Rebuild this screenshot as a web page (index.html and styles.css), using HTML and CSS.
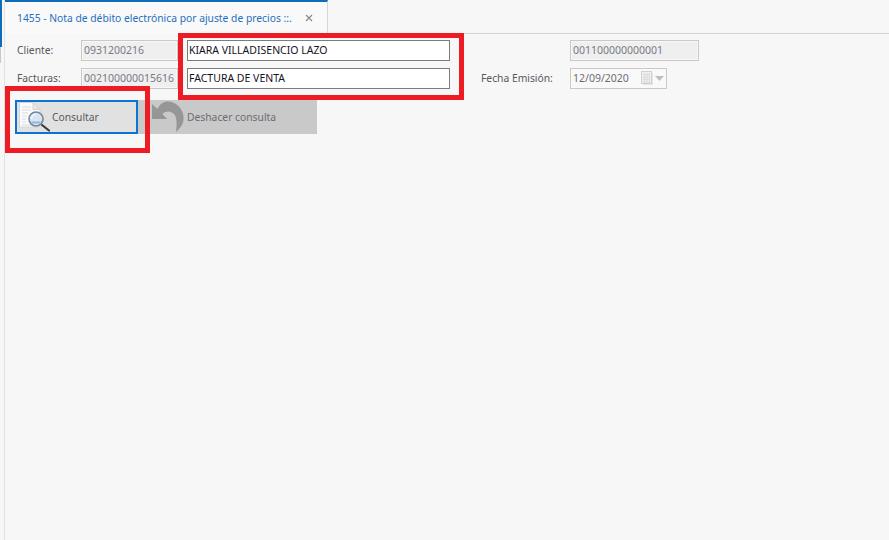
FILE: index.html
```html
<!DOCTYPE html>
<html lang="es">
<head>
<meta charset="utf-8">
<title>Nota de débito</title>
<link rel="stylesheet" href="styles.css">
</head>
<body>
<div class="app">
  <div class="rail"><div class="rail-blue"></div><div class="rail-gray"></div></div>
  <div class="main">
    <div class="tabbar">
      <div class="tab">
        <span class="tab-title">1455 - Nota de débito electrónica por ajuste de precios ::.</span>
        <svg class="tab-close" width="8" height="8" viewBox="0 0 8 8"><path d="M1 1l6 6M7 1l-6 6" stroke="#8a8a8a" stroke-width="1.2" fill="none"/></svg>
      </div>
    </div>
    <div class="form">
      <div class="row">
        <label class="lbl">Cliente:</label>
        <div class="field ro f-code">0931200216</div>
        <div class="field edit f-name">KIARA VILLADISENCIO LAZO</div>
        <div class="field ro f-right">001100000000001</div>
      </div>
      <div class="row">
        <label class="lbl">Facturas:</label>
        <div class="field ro f-code">002100000015616</div>
        <div class="field edit f-name">FACTURA DE VENTA</div>
        <label class="lbl lbl-date">Fecha Emisión:</label>
        <div class="field date">
          <span class="date-text">12/09/2020</span>
          <svg class="cal" width="14" height="16" viewBox="0 0 14 16"><rect x="1.500" y="1.500" width="10" height="12" fill="#f0f0f0" stroke="#d0d0d0"/><path d="M3 4.500h7M3 7h7M3 9.500h7M3 12h7M4.500 3v10M7 3v10M9.500 3v10" stroke="#dcdcdc" stroke-width="1"/><path d="M12.500 3v11.500H3" stroke="#e6e6e6" fill="none"/></svg>
          <svg class="caret" width="9" height="5" viewBox="0 0 9 5"><path d="M0 0h9L4.500 5z" fill="#bcc0b6"/></svg>
        </div>
      </div>
      <div class="actions">
        <button class="btn btn-primary" type="button">
          <svg class="btn-icon" width="34" height="32" viewBox="0 0 34 32">
            <path d="M1.500 1.500H15l7 7V26H1.500z" fill="#fbfbfb" stroke="#d6d6d6"/>
            <path d="M15 1.500V8.500h7z" fill="#e8e8e8" stroke="#d2d2d2"/>
            <path d="M4 6h9M4 9h9M4 12h6M4 15h5M4 18h4M4 21h4M4 24h10" stroke="#d8dae0" stroke-width="1"/>
            <path d="M24 24l7 5.500" stroke="#3a3a3a" stroke-width="2.200" stroke-linecap="round"/>
            <circle cx="18" cy="18" r="7" fill="#d6e4f3" stroke="#71859b" stroke-width="1.600"/>
            <path d="M13.500 18a4.500 4.500 0 0 1 4.500-4.500" stroke="#f6f9fc" stroke-width="1.500" fill="none"/>
            <path d="M13.500 21.500h9" stroke="#94b6d8" stroke-width="2"/>
          </svg>
          <span>Consultar</span>
        </button>
        <button class="btn btn-off" type="button" disabled>
          <svg class="btn-icon-undo" width="34" height="32" viewBox="0 0 34 32">
            <path d="M0 3V18H15L10.500 13C14 9.500 19 10 22 13C25 16 25 23 24 31C30 26 33 20 31 13C29 5 22 0 15 .5C11 1 8 3 5.500 8Z" fill="#969696"/>
          </svg>
          <span>Deshacer consulta</span>
        </button>
      </div>
    </div>
  </div>
</div>
<div class="mark mark-fields"></div>
<div class="mark mark-button"></div>
</body>
</html>
```
FILE: styles.css
```css
* { box-sizing: border-box; }
html, body { margin: 0; padding: 0; height: 100%; overflow: hidden; }
body {
  background: #f7f7f7;
  font-family: "Noto Sans", "Open Sans", sans-serif;
  font-size: 10.3px;
  color: #555a62;
  position: relative;
}
.app { display: flex; width: 889px; height: 540px; }
.rail { width: 4px; flex: none; display: flex; flex-direction: column; }
.rail-blue { width: 2px; height: 47px; background: #0f6cb8; }
.rail-gray { width: 1px; height: 16px; background: #c8c8c8; }
.main { flex: 1; display: flex; flex-direction: column; border-left: 1px solid #e2e2e2; }
.tabbar { height: 34px; flex: none; border-bottom: 1px solid #d2d2d2; }
.tab {
  width: 323px;
  height: 34px;
  border-top: 2px solid #0f6cb8;
  border-right: 1px solid #d6d6d6;
  display: flex;
  align-items: center;
  padding: 0 14px 0 12px;
  justify-content: space-between;
  background: #f9f9f9;
}
.tab-title { color: #1f6fbe; white-space: nowrap; }
.tab-close { flex: none; }
.form { padding: 6px 0 0 12px; display: flex; flex-direction: column; gap: 8px; }
.row { display: flex; align-items: center; height: 20px; }
.lbl { width: 64px; flex: none; color: #55585e; }
.field {
  height: 21px;
  display: flex;
  align-items: center;
  flex: none;
  padding-left: 1px;
  border: 1px solid #c9c9c9;
  white-space: nowrap;
  font-size: 10.5px;
}
.ro { background: #efefef; box-shadow: inset 0 0 0 1px #f7f7f7; color: #7a7a86; padding-left: 2px; }
.f-code { width: 97px; margin-right: 9px; }
.edit { background: #fff; border-color: #7c7c7c; color: #14141e; }
.f-name { width: 263px; }
.f-right { width: 129px; margin-left: 120px; }
.lbl-date { margin-left: 31px; width: 89px; }
.date { width: 97px; background: #f9f9f9; color: #6c6c76; padding-left: 2px; }
.date-text { width: 67px; }
.cal { flex: none; }
.caret { flex: none; margin-left: 1px; }
.actions { display: flex; margin-top: 4px; margin-left: -2px; }
.btn {
  height: 34px;
  display: flex;
  align-items: center;
  font: inherit;
  padding: 0;
  border: 0;
  flex: none;
}
.btn-primary {
  width: 123px;
  background: #e1e1e1;
  border: 2px solid #0a74d0;
  color: #565a62;
  padding-left: 1px;
}
.btn-icon { flex: none; margin-right: 0; }
.btn-off {
  width: 179px;
  background: #c9c9c9;
  color: #6c6c74;
  padding-left: 14px;
}
.btn-icon-undo { flex: none; margin-right: 1px; }
.mark { position: absolute; border: 5px solid #ed1c24; pointer-events: none; }
.mark-fields { left: 178px; top: 33px; width: 286px; height: 67px; }
.mark-button { left: 5px; top: 86px; width: 145px; height: 67px; }
```
